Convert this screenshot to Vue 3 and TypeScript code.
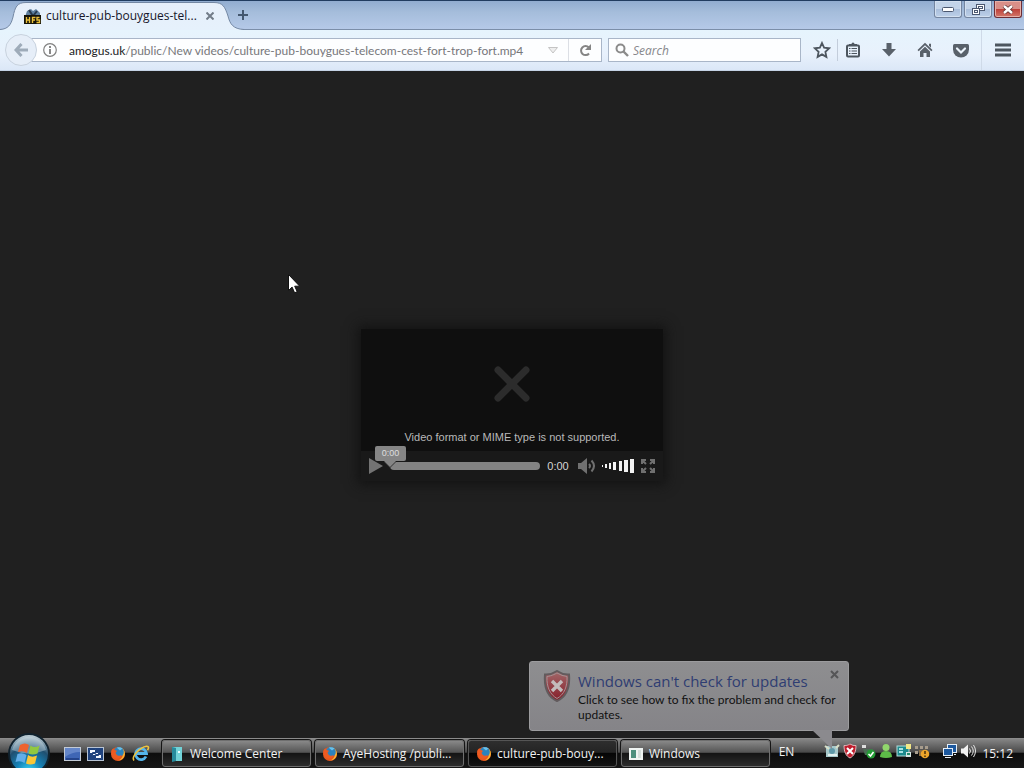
<script setup lang="ts">
import { ref } from 'vue'

interface Task {
  label: string
  icon: 'welcome' | 'firefox' | 'window'
  active: boolean
}

interface VolumeBar {
  width: number
  height: number
}

const tasks: Task[] = [
  { label: 'Welcome Center', icon: 'welcome', active: false },
  { label: 'AyeHosting /publi...', icon: 'firefox', active: false },
  { label: 'culture-pub-bouy...', icon: 'firefox', active: true },
  { label: 'Windows', icon: 'window', active: false },
]

const volumeBars: VolumeBar[] = [
  { width: 1, height: 2 },
  { width: 2, height: 4 },
  { width: 2, height: 6 },
  { width: 3, height: 8 },
  { width: 3, height: 10 },
  { width: 4, height: 12 },
  { width: 4, height: 14 },
]
const query = ref<string>('')
const balloonOpen = ref<boolean>(true)
</script>

<template>
  <svg class="defs" width="0" height="0" aria-hidden="true">
    <defs>
      <linearGradient id="tabFill" x1="0" y1="0" x2="0" y2="1">
        <stop offset="0" stop-color="#e6effa" />
        <stop offset="1" stop-color="#e6f1fc" />
      </linearGradient>
      <radialGradient id="orbFill" cx="0.5" cy="0.95" r="0.9">
        <stop offset="0" stop-color="#3fdcf8" />
        <stop offset="0.35" stop-color="#1583b8" />
        <stop offset="0.7" stop-color="#1f4f70" />
        <stop offset="1" stop-color="#b9cad2" />
      </radialGradient>
      <linearGradient id="shieldFill" x1="0" y1="0" x2="0" y2="1">
        <stop offset="0" stop-color="#a2686a" />
        <stop offset="1" stop-color="#861c28" />
      </linearGradient>
      <symbol id="fox" viewBox="0 0 16 16">
        <circle cx="8" cy="8" r="7" fill="#e8571c" />
        <path d="M12 2.200c2.400 1.600 3.200 4 2.800 6.600-.6 3.400-3 5.600-6.400 5.800 3.200-1.600 4.400-3.600 4.400-6.300z" fill="#f9b62f" />
        <circle cx="8.800" cy="6" r="5" fill="#2c83bd" />
        <path d="M6.800 1.700c2-.9 4.200-.5 5.800.8L10 4.500z" fill="#69c0e8" />
        <path d="M1.200 5C2 3 3 2.600 3.600 2.200c.2 1 .6 1.600 1.400 2 1 0 1.600.2 2 .8L5.600 6.600c.2 2 1.600 3.200 3.200 3.200 1.200 0 2-.6 2.800-.8-.6 3-3.800 4-5.800 3.600C2.800 11.800 1 9 1.200 5z" fill="#ee5b22" />
      </symbol>
    </defs>
  </svg>

  <div class="desktop">
    <header class="titlebar">
      <div class="tab">
        <svg class="tab-shape" width="244" height="29" viewBox="0 0 244 29" aria-hidden="true">
          <path d="M0 28.500C8 28 11 24 13 16 15 6 17 1.500 26 1.500H214C223 1.500 225 6 228 15 230 23 233 28 244 28.500V29H0Z" fill="url(#tabFill)" />
          <path d="M0 28.500C8 28 11 24 13 16 15 6 17 1.500 26 1.500H214C223 1.500 225 6 228 15 230 23 233 28 244 28.500" fill="none" stroke="#7387a3" />
        </svg>
        <svg class="tab-icon" width="17" height="16" viewBox="0 0 17 16" aria-hidden="true">
          <path d="M1 9 3 3l4-2 2 2 3-2 4 4v5H1z" fill="#5d7f9f" />
          <path d="M5 2l4 6 4-5" stroke="#28394b" stroke-width="2" fill="none" />
          <rect y="7" width="17" height="9" fill="#141208" />
          <path d="M2.500 9v6M5.500 9v6M2.500 12h3M8.500 15V9.500h3M8.500 12h2.500M15.500 9.500h-2.500V12h2.500v2.500h-3" stroke="#e9bf3a" stroke-width="1.400" fill="none" />
        </svg>
        <span class="tab-title">culture-pub-bouygues-tel...</span>
        <button class="plain tab-close" aria-label="Close tab">
          <svg width="8" height="8" viewBox="0 0 8 8"><path d="M.5.5l7 7M7.500.5l-7 7" stroke="#727c88" stroke-width="2" /></svg>
        </button>
      </div>
      <button class="plain new-tab" aria-label="New tab">
        <svg width="10" height="10" viewBox="0 0 10 10"><path d="M5 0v10M0 5h10" stroke="#44576e" stroke-width="2" /></svg>
      </button>
      <div class="window-buttons">
        <button class="wbtn" aria-label="Minimize">
          <svg width="12" height="5" viewBox="0 0 12 5"><rect x=".5" y=".5" width="11" height="4" rx="1" fill="#fff" stroke="#4b5870" /></svg>
        </button>
        <button class="wbtn" aria-label="Restore">
          <svg width="13" height="11" viewBox="0 0 13 11" fill="#fff" stroke="#4b5870"><rect x="4.500" y=".5" width="8" height="6" /><rect x="6.500" y="2.500" width="4" height="2" /><rect x=".5" y="4.500" width="7" height="6" /><rect x="2.500" y="6.500" width="3" height="2" /></svg>
        </button>
        <button class="wbtn close" aria-label="Close window">
          <svg width="12" height="9" viewBox="0 0 12 9"><path d="M2 1l8 7M10 1 2 8" stroke="#5d3030" stroke-width="4" /><path d="M2 1l8 7M10 1 2 8" stroke="#fff" stroke-width="2.400" /></svg>
        </button>
      </div>
    </header>

    <nav class="toolbar" aria-label="Navigation">
      <button class="plain back" aria-label="Back">
        <svg width="14" height="14" viewBox="0 0 14 14"><path d="M7.500 1 2 7l5.500 6M2 7h12" fill="none" stroke="#9eabb9" stroke-width="3" /></svg>
      </button>
      <div class="address">
        <button class="plain info" aria-label="Site information">
          <svg width="14" height="14" viewBox="0 0 14 14"><circle cx="7" cy="7" r="6.300" fill="none" stroke="#808080" stroke-width="1.200" /><path d="M7 6v5M7 3v2" stroke="#6a6a6a" stroke-width="1.600" /></svg>
        </button>
        <a class="url" href="#"><b>amogus.uk</b>/public/New videos/culture-pub-bouygues-telecom-cest-fort-trop-fort.mp4</a>
        <button class="plain drop" aria-label="History">
          <svg width="10" height="7" viewBox="0 0 10 7"><path d="M.5.5h9L5 6z" fill="#eee" stroke="#c4c4c4" /></svg>
        </button>
        <button class="plain reload" aria-label="Reload">
          <svg width="13" height="13" viewBox="0 0 13 13"><path d="M10 9.500A4.500 4.500 0 1 1 9.800 3.500" fill="none" stroke="#858585" stroke-width="2" /><path d="M12 0v6H6z" fill="#858585" /></svg>
        </button>
      </div>
      <label class="search">
        <svg width="14" height="14" viewBox="0 0 14 14" aria-hidden="true"><circle cx="5.500" cy="5.500" r="4" fill="none" stroke="#8b8b8b" stroke-width="2" /><path d="M8.500 8.500 13 13" stroke="#8b8b8b" stroke-width="2.400" /></svg>
        <input v-model="query" type="text" placeholder="Search" aria-label="Search" />
      </label>
      <div class="tools">
        <button class="plain tool star" aria-label="Bookmark this page">
          <svg width="18" height="18" viewBox="0 0 18 18"><path d="M9 2l2.100 4.700 5 .6-3.700 3.500 1 5.100L9 13.400l-4.400 2.500 1-5.100L1.900 7.300l5-.6z" fill="none" stroke="#4d565f" stroke-width="1.800" /></svg>
        </button>
        <button class="plain tool clip" aria-label="Bookmarks">
          <svg width="16" height="16" viewBox="0 0 16 16"><rect x="2" y="3.500" width="12" height="11" rx="1" fill="none" stroke="#4d565f" stroke-width="2" /><path d="M4 4V2h2.500a1.500 1.500 0 0 1 3 0H12v2z" fill="#4d565f" /><path d="M4 6.500h1.500M6.500 6.500H12M4 9h1.500M6.500 9H12M4 11.500h1.500M6.500 11.500H12" stroke="#4d565f" stroke-width="1.200" /></svg>
        </button>
        <button class="plain tool" aria-label="Downloads">
          <svg width="16" height="16" viewBox="0 0 16 16"><path d="M5.500 1h5v6H15l-7 7.500L1 7h4.500z" fill="#59616a" /></svg>
        </button>
        <button class="plain tool" aria-label="Home">
          <svg width="16" height="16" viewBox="0 0 16 16"><path d="M8 .8 15.500 8l-1.200 1.200L8 3.200 1.700 9.200.5 8zM12 1.800h2v4l-2-2z" fill="#59616a" /><path d="M3 9.500 8 4.800l5 4.700V15H9.500v-4h-3v4H3z" fill="#59616a" /></svg>
        </button>
        <button class="plain tool" aria-label="Pocket">
          <svg width="16" height="15" viewBox="0 0 16 15"><path d="M1.500 1h13Q16 1 16 2.500V6.500a8 8 0 0 1-16 0V2.500Q0 1 1.500 1z" fill="#59616a" /><path d="M4 5.500l4 4 4-4" fill="none" stroke="#edf5fd" stroke-width="2.200" stroke-linecap="round" /></svg>
        </button>
        <button class="plain tool menu" aria-label="Menu">
          <svg width="16" height="14" viewBox="0 0 16 14"><path d="M0 2h16M0 7h16M0 12h16" stroke="#4d565f" stroke-width="3" /></svg>
        </button>
      </div>
    </nav>

    <main class="page">
      <section class="player" aria-label="Video player">
        <div class="error">
          <svg width="36" height="36" viewBox="0 0 36 36" aria-hidden="true"><path d="M4 4l28 28M32 4 4 32" stroke="#2c2c2c" stroke-width="7" stroke-linecap="round" /></svg>
          <p>Video format or MIME type is not supported.</p>
        </div>
        <div class="controls">
          <button class="plain play" aria-label="Play">
            <svg width="14" height="16" viewBox="0 0 14 16"><path d="M0 0l14 8-14 8z" fill="#737373" /></svg>
          </button>
          <div class="track" role="progressbar" aria-label="Position">
            <span class="tip">0:00</span>
          </div>
          <span class="time">0:00</span>
          <button class="plain mute" aria-label="Mute">
            <svg width="18" height="16" viewBox="0 0 18 16"><path d="M0 5h3l6-5v16l-6-5H0z" fill="#707070" /><path d="M11 6q2 2 0 4M13.500 2.500q5 5.500 0 11" fill="none" stroke="#707070" stroke-width="2" /></svg>
          </button>
          <div class="volume" aria-label="Volume">
            <i v-for="b in volumeBars" :key="b.height" :style="{ width: b.width + 'px', height: b.height + 'px' }"></i>
          </div>
          <button class="plain full" aria-label="Full screen">
            <svg width="14" height="14" viewBox="0 0 14 14"><path d="M1 5V1h4M9 1h4v4M13 9v4H9M5 13H1V9M1 1l4 4M13 1 9 5M13 13 9 9M1 13l4-4" fill="none" stroke="#707070" stroke-width="2" /></svg>
          </button>
        </div>
      </section>
    </main>

    <footer class="taskbar">
      <button class="plain start" aria-label="Start">
        <svg width="42" height="42" viewBox="0 0 42 42">
          <circle cx="21" cy="21" r="20" fill="url(#orbFill)" stroke="#10222e" stroke-width="2" />
          <path d="M4 17a17.500 17.500 0 0 1 34 0Q21 24 4 17z" fill="#dce8ee" opacity=".4" />
          <path d="M12 12q5-3 9 0l-2 8q-4-3-9-1z" fill="#ed6330" />
          <path d="M22.500 12.500q4 3 9 0l-2 8q-5 2-9 0z" fill="#91c83f" />
          <path d="M9.500 21q5-2 9 1l-2 8q-4-3-9-1z" fill="#62aee8" />
          <path d="M20 22q4 3 9 .5l-2 8q-5 2-9 0z" fill="#fbc736" />
        </svg>
      </button>
      <div class="quick">
        <button class="plain" aria-label="Show desktop">
          <svg width="17" height="14" viewBox="0 0 17 14"><rect x=".5" y=".5" width="16" height="13" fill="#3f66b5" stroke="#c3cbd6" /><path d="M1 1h15v4Q8 5 1 10z" fill="#6486c9" /><path d="M2 12h13" stroke="#24448b" stroke-width="2" /></svg>
        </button>
        <button class="plain" aria-label="Switch windows">
          <svg width="17" height="14" viewBox="0 0 17 14"><rect x=".5" y=".5" width="16" height="13" fill="#1f427d" stroke="#b7c3d3" /><path d="M2.500 2.500h6v4h-6zM5.500 5.500h6v3h-6zM8.500 7.500h6v4h-6z" fill="#f1f6fc" stroke="#1f427d" /></svg>
        </button>
        <button class="plain" aria-label="Firefox">
          <svg width="16" height="16"><use href="#fox" /></svg>
        </button>
        <button class="plain" aria-label="Internet Explorer">
          <svg width="18" height="17" viewBox="0 0 18 17"><path d="M14 11.500A5.500 5.500 0 1 1 14.500 8.500H5" fill="none" stroke="#54b5ec" stroke-width="2.800" /><path d="M2 15.500C-1 12 8 2 14.500 1.200c3-.2 2 2.500 1 4" fill="none" stroke="#efc43e" stroke-width="1.600" /></svg>
        </button>
      </div>
      <div class="tasks">
        <button v-for="t in tasks" :key="t.label" class="task" :class="{ active: t.active }">
          <svg v-if="t.icon === 'welcome'" width="16" height="16" viewBox="0 0 16 16"><path d="M3 1h10v14H3z" fill="#72d3d8" /><path d="M3 1l4 1v13l-4 1z" fill="#278b9c" /><path d="M9 5h2v2H9z" fill="#e9ffff" /></svg>
          <svg v-else-if="t.icon === 'firefox'" width="16" height="16"><use href="#fox" /></svg>
          <svg v-else width="16" height="16" viewBox="0 0 16 16"><rect x="1" y="2" width="14" height="12" fill="#eff4f2" /><rect x="3" y="4" width="5" height="8" fill="#4d8f7d" /><path d="M10 4h3v8h-3z" fill="#d5dedb" /></svg>
          <span>{{ t.label }}</span>
        </button>
      </div>
      <div class="tray">
        <span class="lang">EN</span>
        <svg width="16" height="16" viewBox="0 0 16 16"><rect x="2" y="3" width="12" height="11" fill="#a6c8ca" /><path d="M1 3l4 3M12 5l3-3" stroke="#d9dfc7" stroke-width="2" /><circle cx="8" cy="8" r="3" fill="#5e98a8" /><path d="M4 12h9" stroke="#e2f1f0" stroke-width="2" /></svg>
        <svg width="16" height="16" viewBox="0 0 16 16"><path d="M8 1q3 2 6 1.500C14 9 12 13 8 15 4 13 2 9 2 2.500 5 3 8 1 8 1z" fill="#c01c2c" stroke="#dfb8bb" /><path d="M5 5l6 6M11 5l-6 6" stroke="#fff" stroke-width="2" /></svg>
        <svg width="16" height="16" viewBox="0 0 16 16"><path d="M2 2h4v3H2z" fill="#ddd" /><path d="M3 6h10v6H5z" fill="#4d6d57" /><circle cx="11" cy="11" r="4.500" fill="#249b35" /><path d="M8.500 11l2 2 3-4" fill="none" stroke="#fff" stroke-width="1.500" /></svg>
        <svg width="16" height="16" viewBox="0 0 16 16"><circle cx="8" cy="4.500" r="3.500" fill="#91d66c" /><path d="M2 14q0-6 6-6t6 6q-6 2-12 0z" fill="#5dbb48" /></svg>
        <svg width="16" height="16" viewBox="0 0 16 16"><rect x="1" y="3" width="12" height="10" fill="#1d8b8e" stroke="#b4dcd9" /><path d="M3 6h4M3 9h4" stroke="#d8ffff" stroke-width="1.500" /><path d="M10 1h5v5h-5z" fill="#f3e886" /><path d="M10 9h5v5h-5z" fill="#d7e7e5" /><path d="M11 11h3" stroke="#258b6a" stroke-width="2" /></svg>
        <svg width="16" height="16" viewBox="0 0 16 16"><path d="M1 3h3v3H1zM6 3h3v3H6zM11 3h3v3h-3zM1 8h3v3H1z" fill="#a89d8d" /><path d="M5 7h7v6H5z" fill="#8b6d44" /><circle cx="11" cy="11" r="4.300" fill="#eda52b" /><path d="M11 8v3M11 12.500v1.500" stroke="#55380b" stroke-width="1.600" /></svg>
        <svg class="network" width="16" height="16" viewBox="0 0 16 16"><rect x="5.500" y="1.500" width="9" height="8" fill="#1c589e" stroke="#e4edf6" /><rect x="1.500" y="5.500" width="9" height="7" fill="#1c589e" stroke="#e4edf6" /><path d="M3 14.500h6M12 11.500h2" stroke="#e4edf6" /></svg>
        <svg width="16" height="16" viewBox="0 0 16 16"><path d="M1 5.500h2.500L8 1.500v13l-4.500-4H1z" fill="#f1f1f1" /><path d="M9.500 5.500q2 2.500 0 5M11.500 3.500q3.500 4.500 0 9M13.500 2q4 6 0 12" fill="none" stroke="#e7e7e7" /></svg>
        <time class="clock">15:12</time>
      </div>
    </footer>

    <aside v-if="balloonOpen" class="balloon">
      <svg width="28" height="32" viewBox="0 0 28 32" aria-hidden="true">
        <path d="M14 1q6 4 12 3.500C27 17 23 27 14 31 5 27 1 17 2 4.500 8 5 14 1 14 1z" fill="url(#shieldFill)" stroke="#625b5d" stroke-width="2" />
        <path d="M14 3q5 3 10 3.500C24.500 17 21 24.500 14 28.500 7 24.500 3.500 17 4 6.500 9 6 14 3 14 3z" fill="none" stroke="#a39294" />
        <path d="M9 11l10 10M19 11 9 21" stroke="#c3bbbc" stroke-width="3.400" />
      </svg>
      <div class="balloon-text">
        <h2>Windows can't check for updates</h2>
        <p>Click to see how to fix the problem and check for updates.</p>
      </div>
      <button class="plain balloon-close" aria-label="Dismiss" @click="balloonOpen = false">
        <svg width="9" height="9" viewBox="0 0 9 9"><path d="M1 1l7 7M8 1 1 8" stroke="#555557" stroke-width="2" /></svg>
      </button>
      <svg class="tail" width="22" height="20" viewBox="0 0 22 20" aria-hidden="true"><path d="M0 0h20v19z" fill="#8b8a8e" /></svg>
    </aside>

    <svg class="cursor" width="12" height="20" viewBox="0 0 12 20" aria-hidden="true"><path d="M.5.5v16l3.600-3.400 2.500 5.700 2.600-1.100-2.500-5.500h5z" fill="#fff" stroke="#111" /></svg>
  </div>
</template>

<style>
html,
body {
  margin: 0;
  background: #202020;
}
</style>

<style scoped>
.defs {
  position: absolute;
}

.desktop {
  position: relative;
  display: flex;
  flex-direction: column;
  min-height: 100vh;
  overflow: hidden;
  background: #202020;
  font-family: "Open Sans", "Noto Sans", sans-serif;
  font-size: 12px;
}

.plain {
  display: flex;
  align-items: center;
  justify-content: center;
  flex: none;
  padding: 0;
  border: 0;
  background: none;
  font: inherit;
}

svg {
  flex: none;
}

.titlebar {
  display: flex;
  height: 30px;
  box-sizing: border-box;
  border-top: 1px solid #213c60;
  border-bottom: 1px solid #7b8ea9;
  background: linear-gradient(#91acd0, #a5bddb 40%, #b5c9e8);
}

.tab {
  position: relative;
  display: flex;
  align-items: center;
  width: 232px;
  height: 29px;
  box-sizing: border-box;
  padding: 0 12px 0 24px;
}

.tab > * {
  position: relative;
}

.tab .tab-shape {
  position: absolute;
  top: 0;
  left: 0;
}

.tab-title {
  flex: 1;
  margin-left: 5px;
  color: #17172b;
  white-space: nowrap;
}

.tab-close {
  width: 20px;
  height: 20px;
}

.new-tab {
  width: 22px;
}

.window-buttons {
  display: flex;
  gap: 2px;
  height: 17px;
  margin-left: auto;
  padding-right: 2px;
}

.wbtn {
  display: flex;
  align-items: center;
  justify-content: center;
  width: 28px;
  padding: 0;
  border: 1px solid #7485a0;
  border-top: 0;
  border-radius: 0 0 3px 3px;
  background: linear-gradient(#c3d4e9 50%, #a9bedb 50%, #bdd0e9);
  box-shadow: inset 0 0 0 1px #d3e0f0;
}

.wbtn.close {
  border-color: #6d2d35;
  background: linear-gradient(#d98f88 50%, #be3f38 50%, #d2776a);
  box-shadow: inset 0 0 0 1px #e7b0a8;
}

.toolbar {
  display: flex;
  align-items: center;
  height: 41px;
  box-sizing: border-box;
  padding-left: 5px;
  border-bottom: 1px solid #c5d3e5;
  background: linear-gradient(#e6f4fd, #e8f1fc 60%, #dbe7f7);
}

.back {
  z-index: 1;
  width: 32px;
  height: 32px;
  border: 1px solid #c8d2de;
  border-radius: 50%;
  background: #e6eef8;
}

.address,
.search {
  display: flex;
  align-items: center;
  height: 24px;
  box-sizing: border-box;
  border: 1px solid #a9b6c8;
  background: #fdfeff;
}

.address {
  flex: 1 1 572px;
  min-width: 0;
  margin-left: -7px;
  padding-left: 12px;
}

.info {
  width: 14px;
}

.url {
  flex: 1;
  min-width: 0;
  overflow: hidden;
  margin-left: 12px;
  color: #77777b;
  font-family: Lato, "Open Sans", sans-serif;
  text-decoration: none;
  white-space: nowrap;
}

.url b {
  color: #202024;
  font-weight: 400;
}

.drop {
  width: 30px;
}

.reload {
  width: 33px;
  height: 22px;
  border-left: 1px solid #dcdfe5;
}

.search {
  flex: 1 1 193px;
  gap: 4px;
  min-width: 0;
  margin-left: 6px;
  padding: 0 6px;
}

.search input {
  flex: 1;
  min-width: 0;
  padding: 0;
  border: 0;
  outline: 0;
  background: none;
  font: inherit;
}

.search input::placeholder {
  color: #87878b;
  font-style: italic;
  opacity: 1;
}

.tools {
  display: flex;
  align-items: center;
  align-self: stretch;
  margin-left: 5px;
}

.tool {
  width: 36px;
  height: 22px;
}

.star,
.clip {
  width: 31px;
}

.clip {
  margin-right: 3px;
  border-left: 1px solid #c3cddb;
}

.menu {
  align-self: stretch;
  width: 43px;
  height: auto;
  margin-left: 2px;
  border-left: 1px solid #cfdae8;
}

.page {
  display: flex;
  flex: 1;
  align-items: center;
  justify-content: center;
}

.player {
  display: flex;
  flex-direction: column;
  width: 302px;
  min-height: 152px;
  background: #0f0f0f;
  box-shadow: 0 0 12px 3px #121212;
}

.error {
  display: flex;
  flex: 1;
  flex-direction: column;
  align-items: center;
  padding-top: 37px;
}

.error p {
  margin: 27px 0 0;
  color: #b9b9b9;
  font: 11px/16px "Liberation Sans", sans-serif;
}

.controls {
  display: flex;
  align-items: center;
  height: 30px;
  padding: 0 8px;
  background: #191919;
}

.track {
  position: relative;
  flex: 1;
  height: 8px;
  margin-left: 7px;
  border-radius: 4px;
  background: #838383;
}

.tip {
  position: absolute;
  bottom: 9px;
  left: -15px;
  width: 31px;
  border-radius: 2px;
  background: #858585;
  color: #dedede;
  font: 9px/15px "Liberation Sans", sans-serif;
  text-align: center;
}

.tip::after {
  position: absolute;
  top: 15px;
  left: 9px;
  border: 6px solid transparent;
  border-top-color: #858585;
  border-bottom: 0;
  content: "";
  filter: drop-shadow(0 1px 0 #333);
}

.time {
  width: 36px;
  margin-right: 2px;
  color: #d6d6d6;
  font: 11px/16px "Liberation Sans", sans-serif;
  text-align: center;
}

.volume {
  display: flex;
  align-items: center;
  justify-content: space-between;
  width: 32px;
  margin: 0 7px 0 6px;
}

.volume i {
  background: #f2f2f2;
}

.taskbar {
  display: flex;
  height: 30px;
  box-sizing: border-box;
  border-top: 1px solid #8b8b8b;
  background: linear-gradient(#858585, #4a4a4a 45%, #0d0d0d 50%, #171717);
  color: #f2f2f2;
}

.start {
  align-self: flex-start;
  height: 42px;
  margin: -6px 0 -20px 8px;
}

.quick {
  display: flex;
  gap: 6px;
  align-items: center;
  margin-left: 14px;
}

.tasks {
  display: flex;
  flex: 1;
  gap: 4px;
  min-width: 0;
  padding: 1px 0;
  margin-left: 12px;
}

.task {
  display: flex;
  flex: 0 1 149px;
  gap: 5px;
  align-items: center;
  min-width: 0;
  overflow: hidden;
  box-sizing: border-box;
  padding: 0 6px;
  border: 1px solid #6f6f6f;
  border-radius: 3px;
  background: linear-gradient(#888, #555 45%, #141414 50%, #2d2d2d);
  box-shadow: 0 0 0 1px #151515;
  color: #f2f2f2;
  font: inherit;
  white-space: nowrap;
}

.task.active {
  padding-left: 7px;
  border-color: #555;
  background: linear-gradient(#2e2e2e, #242424 45%, #050505 50%, #141414);
}

.tray {
  display: flex;
  gap: 2px;
  align-items: center;
  padding: 0 11px 5px 0;
}

.lang {
  margin-right: 28px;
}

.network {
  margin-left: 10px;
}

.clock {
  margin-left: 4px;
  padding-top: 4px;
}

.balloon {
  position: absolute;
  right: 175px;
  bottom: 37px;
  display: flex;
  width: 320px;
  min-height: 70px;
  box-sizing: border-box;
  padding: 8px 8px 0 13px;
  border: 1px solid #9c9c9e;
  border-radius: 3px;
  background: linear-gradient(#8e8e90, #858488);
}

.balloon-text {
  flex: 1;
  margin: 1px 0 0 7px;
}

.balloon h2 {
  margin: 0;
  color: #2f3d72;
  font-size: 15px;
  font-weight: 400;
  line-height: 21px;
  white-space: nowrap;
}

.balloon p {
  margin: 0;
  color: #111;
  font: 12px/15px Lato, "Open Sans", sans-serif;
}

.balloon-close {
  position: absolute;
  top: 8px;
  right: 9px;
}

.tail {
  position: absolute;
  top: 68px;
  right: 14px;
}

.cursor {
  position: absolute;
  top: 274px;
  left: 288px;
}
</style>
